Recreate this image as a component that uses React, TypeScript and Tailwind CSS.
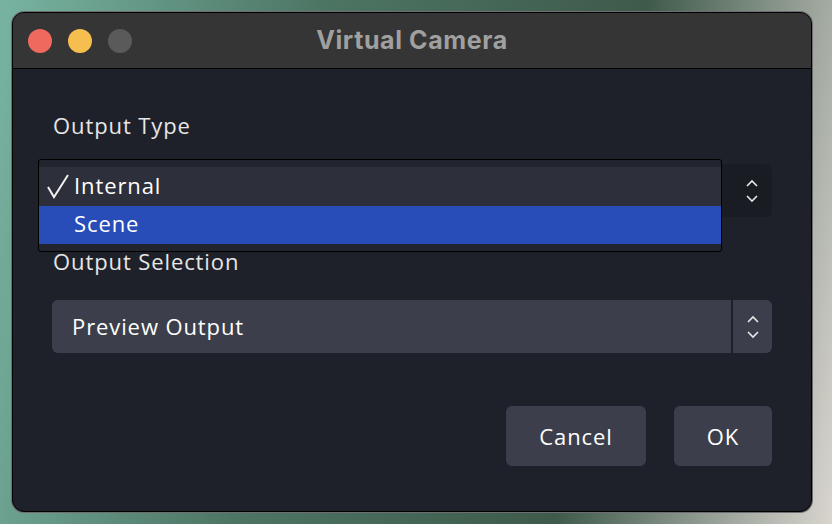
import type { FC } from "react";

const Arrows: FC = () => (
  <svg width="14" height="26" viewBox="0 0 14 26" fill="none" stroke="#e8e8e8" strokeWidth="1.6">
    <polyline points="2,8 7,3 12,8" />
    <polyline points="2,18 7,23 12,18" />
  </svg>
);

const Check: FC = () => (
  <svg width="24" height="26" viewBox="0 0 24 26" fill="none" stroke="#f0f0f0" strokeWidth="2">
    <polyline points="2,14 8,24 22,2" />
  </svg>
);

const App: FC = () => {
  return (
    <div
      className="w-[832px] h-[524px] p-3 bg-[linear-gradient(100deg,#78b3a1_0%,#4d7564_35%,#3e5a4b_70%,#d9d5cf_100%)]"
      style={{ fontFamily: '"Open Sans", "Noto Sans", sans-serif' }}
    >
      <div className="w-[800px] h-[500px] flex flex-col rounded-[12px] overflow-hidden border border-black shadow-[0_0_0_1px_#6e6e72] bg-[#1f212a]">
        {/* title bar */}
        <div className="relative h-[56px] shrink-0 bg-[#353535] border-b border-black flex items-center">
          <div className="flex gap-4 pl-[15px]">
            <div className="size-6 rounded-full bg-[#ee6a5f]" />
            <div className="size-6 rounded-full bg-[#f5be4f]" />
            <div className="size-6 rounded-full bg-[#5a5a5a]" />
          </div>
          <div
            className="absolute inset-0 flex items-center justify-center text-[25px] tracking-[0.6px] font-bold text-[#a0a0a0]"
            style={{ fontFamily: 'Inter, "Liberation Sans", sans-serif' }}
          >
            Virtual Camera
          </div>
        </div>

        {/* body */}
        <div className="flex flex-col px-[39px] pt-[42px] text-[#e6e6e6] text-[22px] tracking-[0.9px]">
          <div className="h-[28px] leading-[28px] pl-px">Output Type</div>

          <div className="relative mt-[25px] h-[53px] rounded-[6px] bg-[#1a1c24] flex items-center justify-end pr-[13px]">
            <Arrows />
            {/* open popup */}
            <div className="absolute left-[-14px] top-[-5px] w-[684px] h-[93px] border border-black bg-[#23252e] rounded-[3px] pt-[7px] flex flex-col">
              <div className="h-[39px] pb-[3px] bg-[#2d2f3a] flex items-center text-white">
                <div className="w-[35px] flex justify-end pr-[4px] pt-[2px]">
                  <Check />
                </div>
                <span>Internal</span>
              </div>
              <div className="h-[38px] pb-[4px] bg-[#284db8] flex items-center text-white pl-[35px]">
                Scene
              </div>
            </div>
          </div>

          <div className="mt-[30px] h-[28px] leading-[28px] pl-px">Output Selection</div>

          <div className="mt-[25px] h-[53px] rounded-[6px] bg-[#3c3f4b] flex items-stretch">
            <div className="flex-1 flex items-center pl-[20px] text-white">Preview Output</div>
            <div className="w-[2px] bg-[#1f212a]" />
            <div className="w-[39px] flex items-center justify-center">
              <Arrows />
            </div>
          </div>

          <div className="mt-[53px] flex justify-end gap-7">
            <button className="w-[140px] h-[60px] rounded-[6px] bg-[#3c3f4b] text-white tracking-[0.9px]">Cancel</button>
            <button className="w-[98px] h-[60px] rounded-[6px] bg-[#3c3f4b] text-white tracking-[0.9px]">OK</button>
          </div>
        </div>
      </div>
    </div>
  );
};

export default App;
